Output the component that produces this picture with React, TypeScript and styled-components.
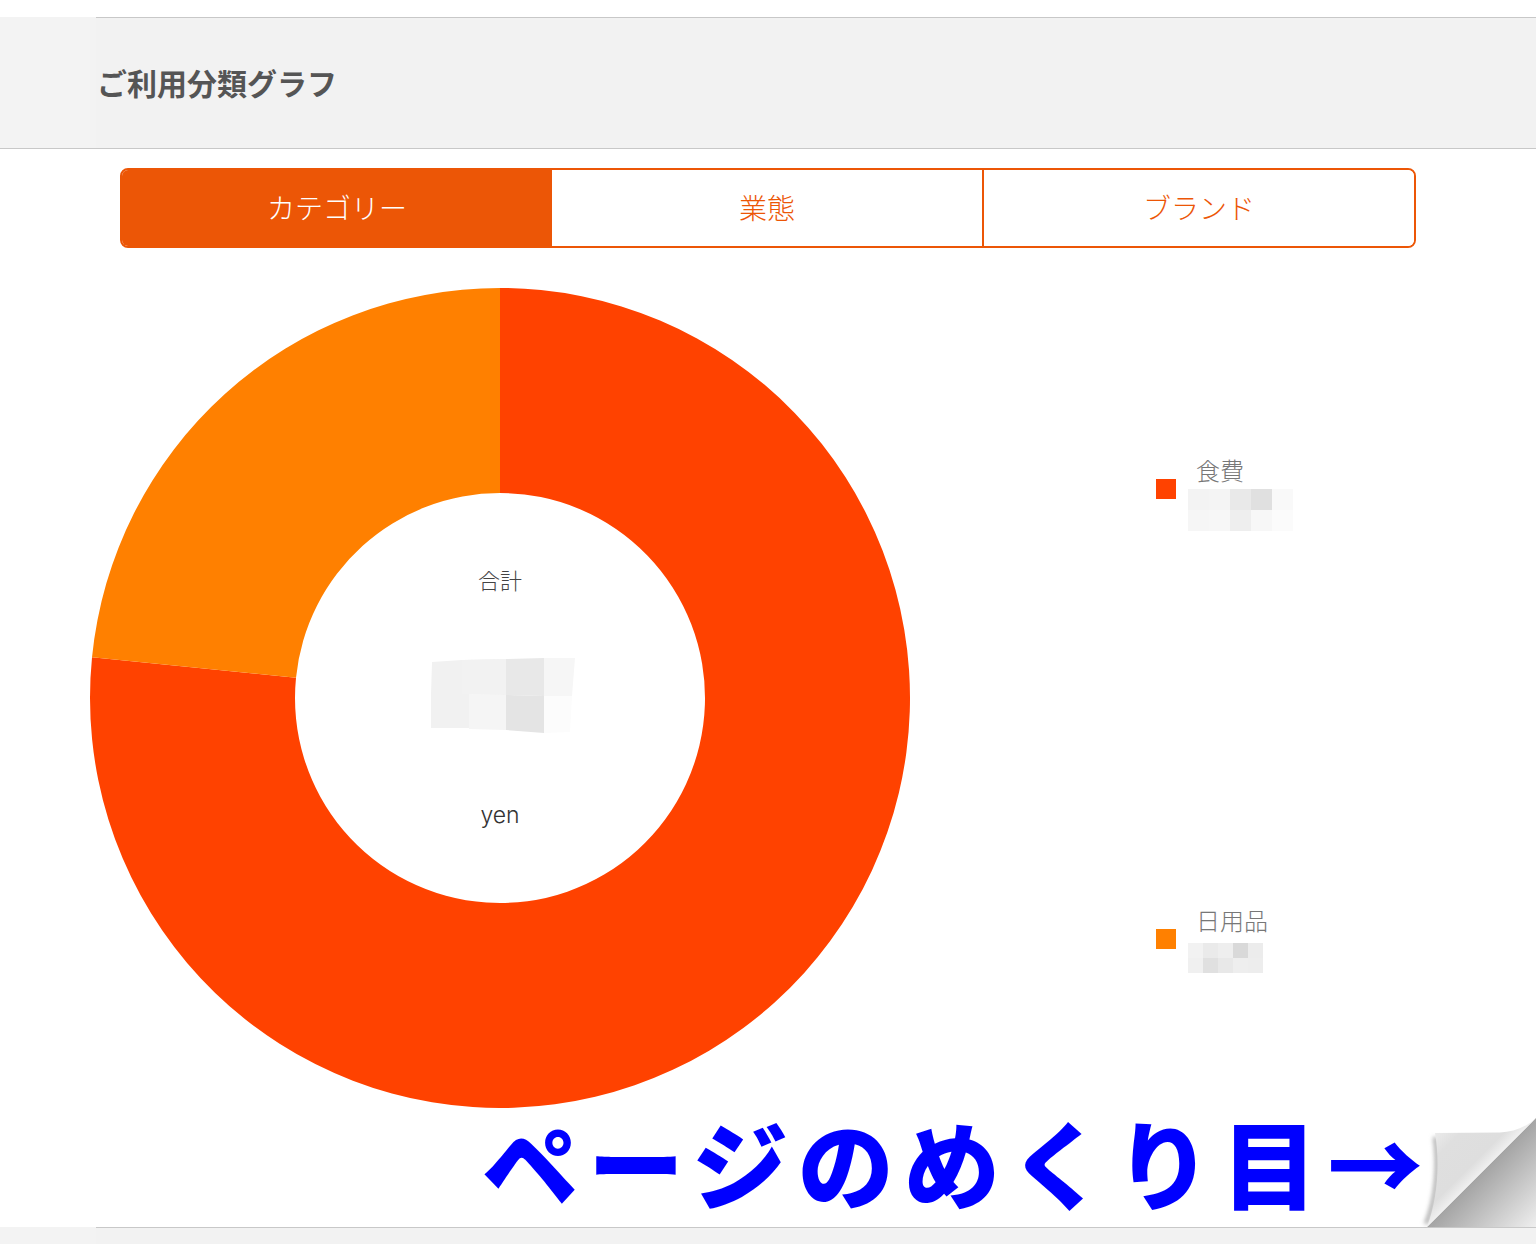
import React from "react";
import styled, { createGlobalStyle } from "styled-components";

const GlobalStyle = createGlobalStyle`
  html, body {
    margin: 0;
    padding: 0;
    background: #fff;
  }
  body {
    font-family: "Liberation Sans", "Noto Sans CJK JP", sans-serif;
  }
`;

const Page = styled.div`
  position: relative;
  width: 1536px;
  height: 1244px;
  overflow: hidden;
  display: flex;
  flex-direction: column;
  padding-top: 17px;
  box-sizing: border-box;
`;

const Header = styled.header`
  background: #f3f3f3;
  border-bottom: 1px solid #c8c8c8;
`;

const HeaderInner = styled.div`
  margin-left: 96px;
  height: 130px;
  background: #f2f2f2;
  border-top: 1px solid #c8c8c8;
  display: flex;
  align-items: center;
`;

const Title = styled.h2`
  margin: -2px 0 0 1px;
  font-family: "Noto Sans CJK JP", sans-serif;
  font-size: 30px;
  font-weight: 700;
  color: #555;
`;

const Tabs = styled.div`
  display: flex;
  margin: 19px 120px 0;
  height: 80px;
  box-sizing: border-box;
  border: 2px solid #ec5606;
  border-radius: 8px;
  overflow: hidden;
`;

const Tab = styled.div<{ $active?: boolean }>`
  flex: 1;
  display: flex;
  align-items: center;
  justify-content: center;
  padding-bottom: 2px;
  font-family: "Noto Sans CJK JP", sans-serif;
  font-size: 28px;
  font-weight: 300;
  color: ${(p) => (p.$active ? "#fff" : "#ec5606")};
  background: ${(p) => (p.$active ? "#ec5606" : "#fff")};
  &:nth-child(2) {
    border-right: 2px solid #ec5606;
  }
`;

const ChartRow = styled.div`
  display: flex;
  margin: 40px 0 0 90px;
`;

const Donut = styled.div`
  position: relative;
  width: 820px;
  height: 820px;
  flex: none;
`;

const DonutCenter = styled.div`
  position: absolute;
  top: 205px;
  left: 205px;
  width: 410px;
  height: 410px;
  display: flex;
  flex-direction: column;
  align-items: center;
`;

const TotalLabel = styled.div`
  margin-top: 71px;
  font-family: "Noto Sans CJK JP", sans-serif;
  font-size: 22px;
  font-weight: 300;
  line-height: 30px;
  color: #444;
`;

const TotalBlur = styled.svg`
  display: block;
  margin: 64px 0 0 8px;
  width: 146px;
  height: 76px;
`;

const TotalUnit = styled.div`
  margin-top: 65px;
  font-family: "Inter", sans-serif;
  font-size: 23px;
  font-weight: 300;
  line-height: 32px;
  color: #333;
`;

const Legend = styled.div`
  margin: 167px 0 0 246px;
  display: flex;
  flex-direction: column;
  gap: 374px;
`;

const LegendItem = styled.div`
  position: relative;
  padding-left: 32px;
`;

const Swatch = styled.span<{ $color: string }>`
  position: absolute;
  left: 0;
  top: 24px;
  width: 20px;
  height: 20px;
  background: ${(p) => p.$color};
`;

const LegendName = styled.div`
  margin-left: 8px;
  font-family: "Noto Sans CJK JP", sans-serif;
  font-size: 24px;
  font-weight: 300;
  line-height: 30px;
  color: #777;
`;

const Mosaic = styled.div<{ $cell: number; $gap: number }>`
  display: grid;
  grid-template-columns: repeat(5, ${(p) => p.$cell}px);
  grid-auto-rows: ${(p) => p.$cell}px;
  margin-top: ${(p) => p.$gap}px;
`;

const MosaicCell = styled.span<{ $shade: string }>`
  background: ${(p) => p.$shade};
`;

const Footer = styled.footer`
  position: absolute;
  left: 0;
  right: 0;
  bottom: 0;
  height: 17px;
  background: #f3f3f3;
`;

const FooterRule = styled.div`
  margin-left: 96px;
  height: 17px;
  box-sizing: border-box;
  background: #f2f2f2;
  border-top: 1px solid #c8c8c8;
`;

const CurlNote = styled.div`
  position: absolute;
  left: 482px;
  top: 1093px;
  font-family: "Noto Sans CJK JP", sans-serif;
  font-size: 96px;
  font-weight: 900;
  line-height: 136px;
  letter-spacing: 9.9px;
  white-space: nowrap;
  color: #0000ff;
`;

const PageCurl = styled.svg`
  position: absolute;
  left: 1410px;
  top: 1110px;
  width: 126px;
  height: 118px;
`;

const polar = (r: number, deg: number) => {
  const a = (deg * Math.PI) / 180;
  return [410 + r * Math.sin(a), 410 - r * Math.cos(a)];
};

// ring slice, clockwise from the top
const slice = (from: number, to: number) => {
  const [x1, y1] = polar(410, from);
  const [x2, y2] = polar(410, to);
  const [x3, y3] = polar(205, to);
  const [x4, y4] = polar(205, from);
  const large = to - from > 180 ? 1 : 0;
  return `M${x1} ${y1}A410 410 0 ${large} 1 ${x2} ${y2}L${x3} ${y3}A205 205 0 ${large} 0 ${x4} ${y4}Z`;
};

const foodShades = ["#f3f3f3", "#f4f4f4", "#e9e9e9", "#e0e0e0", "#f9f9f9", "#f6f6f6", "#f7f7f7", "#eeeeee", "#f7f7f7", "#fbfbfb"];
const dailyShades = ["#f2f2f2", "#eaeaea", "#eeeeee", "#d9d9d9", "#ececec", "#f0f0f0", "#e0e0e0", "#e8e8e8", "#eeeeee", "#ededed"];

const totalCells = [
  { points: "1,4 31,2 75,1 75,37 0,36", fill: "#f1f1f1" },
  { points: "31,2 75,1 75,37 38,36 31,36", fill: "#f2f2f2" },
  { points: "75,1 113,0 113,38 75,37", fill: "#e8e8e8" },
  { points: "113,0 144,0 141,38 113,38", fill: "#f6f6f6" },
  { points: "0,36 38,36 38,70 0,70", fill: "#f1f1f1" },
  { points: "38,36 75,37 75,72 38,71", fill: "#f5f5f5" },
  { points: "75,37 113,38 113,75 75,72", fill: "#e4e4e4" },
  { points: "113,38 141,38 139,74 113,75", fill: "#fcfcfc" },
];

const App = () => {
  return (
    <>
      <GlobalStyle />
      <Page>
        <Header>
          <HeaderInner>
            <Title>ご利用分類グラフ</Title>
          </HeaderInner>
        </Header>
        <Tabs>
          <Tab $active>カテゴリー</Tab>
          <Tab>業態</Tab>
          <Tab>ブランド</Tab>
        </Tabs>
        <ChartRow>
          <Donut>
            <svg width="820" height="820" viewBox="0 0 820 820">
              <path d={slice(0, 275.7)} fill="#ff4200" />
              <path d={slice(275.7, 360)} fill="#ff8000" />
            </svg>
            <DonutCenter>
              <TotalLabel>合計</TotalLabel>
              <TotalBlur viewBox="0 0 146 76">
                {totalCells.map((c, i) => (
                  <polygon key={i} points={c.points} fill={c.fill} />
                ))}
              </TotalBlur>
              <TotalUnit>yen</TotalUnit>
            </DonutCenter>
          </Donut>
          <Legend>
            <LegendItem>
              <Swatch $color="#ff4200" />
              <LegendName>食費</LegendName>
              <Mosaic $cell={21} $gap={4}>
                {foodShades.map((s, i) => (
                  <MosaicCell key={i} $shade={s} />
                ))}
              </Mosaic>
            </LegendItem>
            <LegendItem>
              <Swatch $color="#ff8000" />
              <LegendName>日用品</LegendName>
              <Mosaic $cell={15} $gap={8}>
                {dailyShades.map((s, i) => (
                  <MosaicCell key={i} $shade={s} />
                ))}
              </Mosaic>
            </LegendItem>
          </Legend>
        </ChartRow>
        <Footer>
          <FooterRule />
        </Footer>
        <CurlNote>ページのめくり目→</CurlNote>
        <PageCurl viewBox="0 0 126 118">
          <defs>
            <linearGradient id="curlBack" x1="0.42" y1="0.42" x2="1" y2="1">
              <stop offset="0" stopColor="#989898" />
              <stop offset="1" stopColor="#efefef" />
            </linearGradient>
            <linearGradient id="curlFlap" x1="0" y1="0" x2="1" y2="1">
              <stop offset="0" stopColor="#f6f6f6" />
              <stop offset="0.22" stopColor="#dfdfdf" />
              <stop offset="0.42" stopColor="#dedede" />
              <stop offset="0.5" stopColor="#f0f0f0" />
            </linearGradient>
            <filter id="curlSoft" x="-200%" y="-30%" width="500%" height="160%">
              <feGaussianBlur stdDeviation="2" />
            </filter>
          </defs>
          <path d="M126 8V117H17Z" fill="url(#curlBack)" />
          <path d="M25 27C29 55 27 88 16 114" fill="none" stroke="#a8a8a8" strokeWidth="4" filter="url(#curlSoft)" />
          <path d="M126 8C115 18 103 22 90 22.500L25 23C30 52 28 88 17 117Z" fill="url(#curlFlap)" />
        </PageCurl>
      </Page>
    </>
  );
};

export default App;
